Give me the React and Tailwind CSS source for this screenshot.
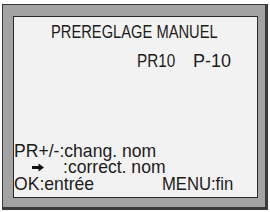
function Arrow() {
  return (
    <svg width="12" height="9" viewBox="0 0 12 9" className="block">
      <path d="M0 3h6.5V0.5L12 4.5 6.5 8.5V6H0z" fill="#111" />
    </svg>
  );
}

export default function App() {
  return (
    <div className="h-[212px] w-[270px] bg-white pl-[2px] pt-[4px]">
      <div className="h-[206px] w-[266px] border border-[#3a3a3a] border-b-[3px] border-r-[3px] bg-[#a3a3a3] pl-[10px] pt-[11px]">
        <div
          className="flex h-[182px] w-[245px] flex-col border border-[#2a2a2a] bg-[#f2f2f2] text-[#1c1c1c]"
          style={{ fontFamily: '"Liberation Sans", Arial, sans-serif' }}
        >
          <div className="mt-[5px] pl-[37px] text-[17.5px] leading-[20px]">
            <span className="inline-block origin-left scale-x-[0.84] whitespace-nowrap">PREREGLAGE MANUEL</span>
          </div>
          <div className="mt-[9px] flex pl-[123px] text-[18px] leading-[20px]">
            <span className="w-[56px]">
              <span className="inline-block origin-left scale-x-[0.85]">PR10</span>
            </span>
            <span>P-10</span>
          </div>
          <div className="mt-auto mb-[5px] text-[18.5px] leading-[16.5px]">
            <div className="whitespace-nowrap">
              <span className="inline-block origin-left scale-x-[0.95]">PR+/-:chang. nom</span>
            </div>
            <div className="flex items-start whitespace-nowrap pl-[18px]">
              <span className="pt-[4px]">
                <Arrow />
              </span>
              <span className="ml-[19px] inline-block origin-left scale-x-[0.95]">:correct. nom</span>
            </div>
            <div className="flex justify-between whitespace-nowrap pr-[24px]">
              <span className="inline-block origin-left scale-x-[0.95]">OK:entrée</span>
              <span className="inline-block origin-right scale-x-[0.9]">MENU:fin</span>
            </div>
          </div>
        </div>
      </div>
    </div>
  );
}
